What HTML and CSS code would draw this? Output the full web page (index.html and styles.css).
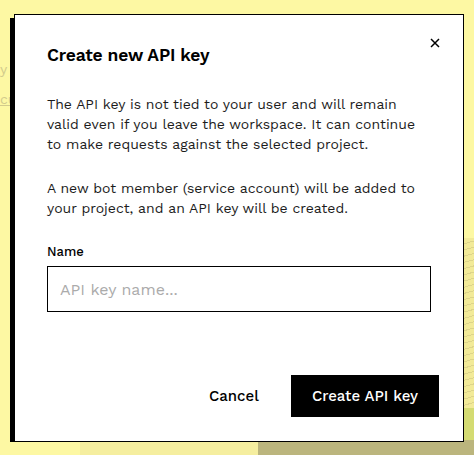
FILE: index.html
```html
<!DOCTYPE html>
<html lang="en">
<head>
    <meta charset="UTF-8">
    <meta name="viewport" content="width=device-width, initial-scale=1.0">
    <title>Create new API key</title>
    <link rel="stylesheet" href="styles.css">
</head>
<body>
    <!-- page behind the dialog -->
    <div class="page">
        <span class="page-text">y</span>
        <a class="page-link" href="#">cu</a>
        <div class="panel panel-lines"></div>
        <div class="panel panel-green"></div>
        <div class="panel panel-olive"></div>
        <div class="panel panel-pale"></div>
    </div>

    <div class="backdrop">
        <div class="modal" role="dialog" aria-labelledby="modal-title">
            <button class="modal-close" type="button" aria-label="Close">
                <svg width="10" height="10" viewBox="0 0 10 10">
                    <path d="M1 1L9 9M9 1L1 9" stroke="#000" stroke-width="1.5" fill="none"/>
                </svg>
            </button>

            <div class="modal-header">
                <h2 class="modal-title" id="modal-title">Create new API key</h2>
            </div>

            <div class="modal-body">
                <p>The API key is not tied to your user and will remain valid even if you leave the workspace. It can continue to make requests against the selected project.</p>
                <p>A new bot member (service account) will be added to your project, and an API key will be created.</p>

                <label class="field-label" for="key-name">Name</label>
                <input class="field-input" type="text" id="key-name" placeholder="API key name...">
            </div>

            <div class="modal-footer">
                <button class="btn btn-plain" type="button">Cancel</button>
                <button class="btn btn-dark" type="button">Create API key</button>
            </div>
        </div>
    </div>
</body>
</html>
```

FILE: styles.css
```css
body {
    margin: 0;
    background-color: #fdf8a3;
    font-family: "Work Sans", Inter, "Noto Sans", sans-serif;
    color: #1c1c1c;
    overflow: hidden;
}

/* Page content sitting under the dialog */
.page {
    position: absolute;
    inset: 0;
    z-index: 0;
}

.page-text {
    position: absolute;
    left: 0;
    top: 61px;
    font-size: 14px;
    color: #d2cb8c;
}

.page-link {
    position: absolute;
    left: 0;
    top: 91px;
    font-size: 14px;
    color: #d2cb8c;
}

.panel {
    position: absolute;
}

.panel-lines {
    left: 464px;
    top: 238px;
    width: 20px;
    height: 180px;
    background: repeating-linear-gradient(165deg, #f2ea98 0 5px, #ddd48a 5px 6px);
}

.panel-green {
    left: 464px;
    top: 408px;
    width: 20px;
    height: 40px;
    background-color: #d4db72;
}

.panel-olive {
    left: 258px;
    top: 440px;
    width: 230px;
    height: 20px;
    background-color: #bbb57d;
}

.panel-pale {
    left: 80px;
    top: 440px;
    width: 178px;
    height: 20px;
    background-color: #f5ee9f;
}

/* Dialog */
.backdrop {
    position: relative;
    z-index: 1;
    padding: 14px 0 0 14px;
}

.modal {
    position: relative;
    width: 450px;
    box-sizing: border-box;
    background-color: #fff;
    border: 1px solid #000;
    box-shadow: -4px 4px 0 #000;
}

.modal-close {
    position: absolute;
    top: 16px;
    right: 16px;
    width: 24px;
    height: 24px;
    padding: 0;
    border: none;
    background: none;
    display: flex;
    align-items: center;
    justify-content: center;
    cursor: pointer;
}

.modal-header {
    padding: 28px 32px 0;
}

.modal-title {
    margin: 0;
    font-size: 17.5px;
    line-height: 24px;
    font-weight: 600;
    color: #000;
    letter-spacing: -0.2px;
}

.modal-body {
    padding: 27px 32px 0;
}

.modal-body p {
    margin: 0 0 24px;
    font-size: 14px;
    line-height: 20px;
}

.field-label {
    display: block;
    margin-bottom: 4px;
    font-size: 13px;
    line-height: 20px;
    font-weight: 500;
    color: #000;
}

.field-input {
    display: block;
    width: 100%;
    height: 46px;
    box-sizing: border-box;
    padding: 0 12px;
    border: 1px solid #000;
    border-radius: 0;
    font-family: inherit;
    font-size: 16px;
    color: #000;
    outline: none;
}

.field-input::placeholder {
    color: #ababab;
}

.modal-footer {
    display: flex;
    justify-content: flex-end;
    gap: 15px;
    padding: 63px 24px 24px;
}

.btn {
    height: 42px;
    padding: 0 18px;
    border: none;
    font-family: inherit;
    font-size: 15px;
    font-weight: 500;
    cursor: pointer;
}

.btn-plain {
    padding: 0 17px;
    background: none;
    color: #000;
}

.btn-dark {
    padding: 0 21px;
    background-color: #000;
    color: #fff;
}
```
